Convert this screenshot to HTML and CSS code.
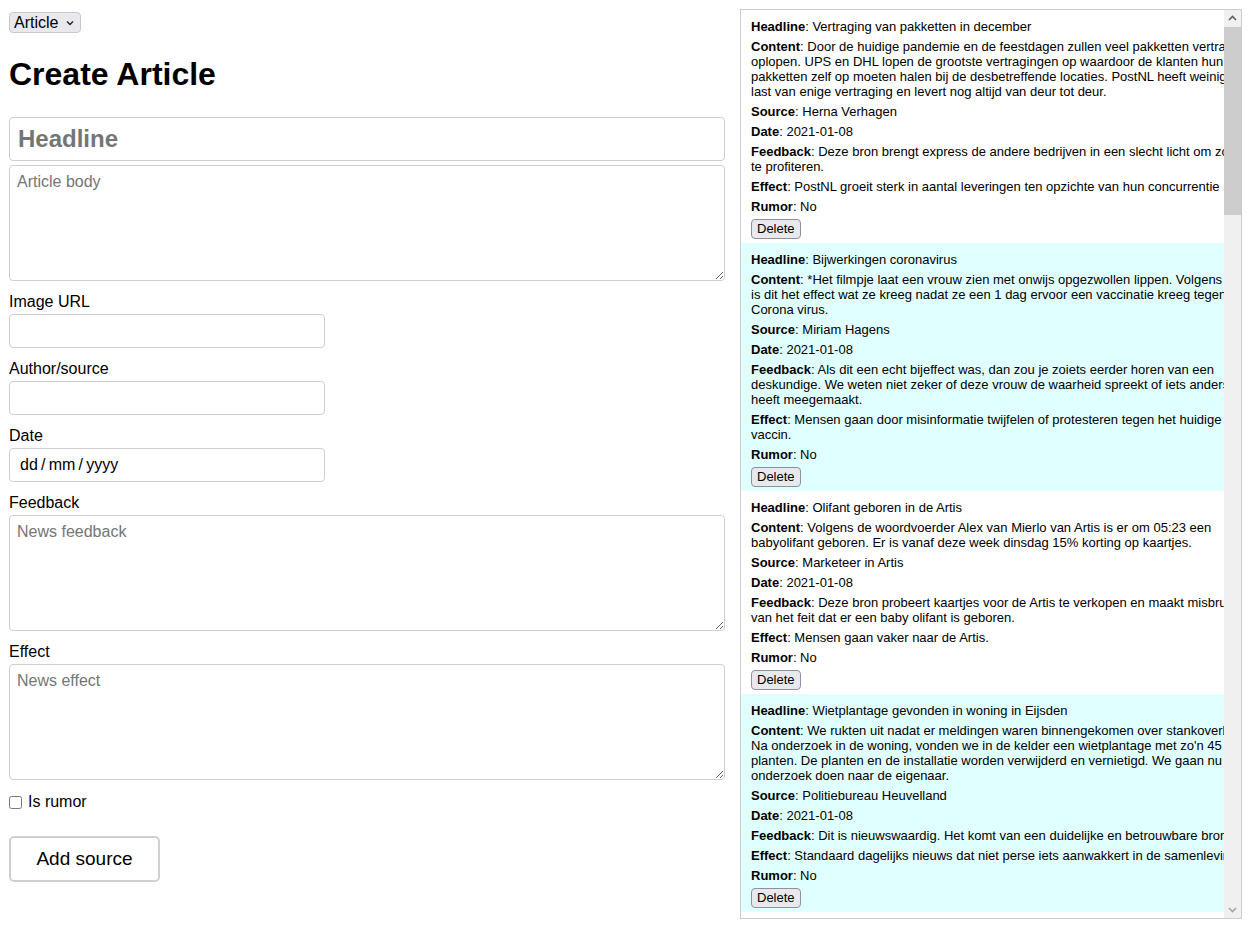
FILE: index.html
```html
<!DOCTYPE html>
<html lang="nl">
<head>
<meta charset="utf-8">
<title>Create Article</title>
<link rel="stylesheet" href="styles.css">
</head>
<body>
<div class="page">
  <main class="editor">
    <div class="select-wrap">
      <select class="type-select">
        <option>Article</option>
      </select>
      <svg class="select-chevron" width="8" height="6" viewBox="0 0 8 6" aria-hidden="true"><path d="M1 1.5 L4 4.5 L7 1.5" fill="none" stroke="#222" stroke-width="1.4"/></svg>
    </div>
    <h1 class="title">Create Article</h1>
    <form class="article-form">
      <input class="headline-input" type="text" placeholder="Headline">
      <textarea class="area body-area" placeholder="Article body"></textarea>
      <label class="field-label">Image URL</label>
      <input class="text-input" type="text">
      <label class="field-label">Author/source</label>
      <input class="text-input" type="text">
      <label class="field-label">Date</label>
      <input class="text-input date-input" type="text" placeholder="dd&#8201;/&#8201;mm&#8201;/&#8201;yyyy">
      <label class="field-label">Feedback</label>
      <textarea class="area" placeholder="News feedback"></textarea>
      <label class="field-label">Effect</label>
      <textarea class="area" placeholder="News effect"></textarea>
      <label class="check-row"><input class="check" type="checkbox"><span>Is rumor</span></label>
      <button class="submit-btn" type="button">Add source</button>
    </form>
  </main>

  <aside class="feed">
    <div class="feed-viewport">
    <div class="feed-list">
      <div class="item">
        <p><b>Headline</b>: Vertraging van pakketten in december</p>
        <p><b>Content</b>: Door de huidige pandemie en de feestdagen zullen veel pakketten vertraging oplopen. UPS en DHL lopen de grootste vertragingen op waardoor de klanten hun pakketten zelf op moeten halen bij de desbetreffende locaties. PostNL heeft weinig<br>last van enige vertraging en levert nog altijd van deur tot deur.</p>
        <p><b>Source</b>: Herna Verhagen</p>
        <p><b>Date</b>: 2021-01-08</p>
        <p><b>Feedback</b>: Deze bron brengt express de andere bedrijven in een slecht licht om zo zelf te profiteren.</p>
        <p><b>Effect</b>: PostNL groeit sterk in aantal leveringen ten opzichte van hun concurrentie</p>
        <p><b>Rumor</b>: No</p>
        <div class="item-actions"><button class="del-btn" type="button">Delete</button></div>
      </div>
      <div class="item">
        <p><b>Headline</b>: Bijwerkingen coronavirus</p>
        <p><b>Content</b>: *Het filmpje laat een vrouw zien met onwijs opgezwollen lippen. Volgens haar is dit het effect wat ze kreeg nadat ze een 1 dag ervoor een vaccinatie kreeg tegen Corona virus.</p>
        <p><b>Source</b>: Miriam Hagens</p>
        <p><b>Date</b>: 2021-01-08</p>
        <p><b>Feedback</b>: Als dit een echt bijeffect was, dan zou je zoiets eerder horen van een deskundige. We weten niet zeker of deze vrouw de waarheid spreekt of iets anders heeft meegemaakt.</p>
        <p><b>Effect</b>: Mensen gaan door misinformatie twijfelen of protesteren tegen het huidige vaccin.</p>
        <p><b>Rumor</b>: No</p>
        <div class="item-actions"><button class="del-btn" type="button">Delete</button></div>
      </div>
      <div class="item">
        <p><b>Headline</b>: Olifant geboren in de Artis</p>
        <p><b>Content</b>: Volgens de woordvoerder Alex van Mierlo van Artis is er om 05:23 een babyolifant geboren. Er is vanaf deze week dinsdag 15% korting op kaartjes.</p>
        <p><b>Source</b>: Marketeer in Artis</p>
        <p><b>Date</b>: 2021-01-08</p>
        <p><b>Feedback</b>: Deze bron probeert kaartjes voor de Artis te verkopen en maakt misbruik van het feit dat er een baby olifant is geboren.</p>
        <p><b>Effect</b>: Mensen gaan vaker naar de Artis.</p>
        <p><b>Rumor</b>: No</p>
        <div class="item-actions"><button class="del-btn" type="button">Delete</button></div>
      </div>
      <div class="item">
        <p><b>Headline</b>: Wietplantage gevonden in woning in Eijsden</p>
        <p><b>Content</b>: We rukten uit nadat er meldingen waren binnengekomen over stankoverlast. Na onderzoek in de woning, vonden we in de kelder een wietplantage met zo'n 45 planten. De planten en de installatie worden verwijderd en vernietigd. We gaan nu onderzoek doen naar de eigenaar.</p>
        <p><b>Source</b>: Politiebureau Heuvelland</p>
        <p><b>Date</b>: 2021-01-08</p>
        <p><b>Feedback</b>: Dit is nieuwswaardig. Het komt van een duidelijke en betrouwbare bron.</p>
        <p><b>Effect</b>: Standaard dagelijks nieuws dat niet perse iets aanwakkert in de samenleving.</p>
        <p><b>Rumor</b>: No</p>
        <div class="item-actions"><button class="del-btn" type="button">Delete</button></div>
      </div>
      <div class="item">
        <p><b>Headline</b>: Vertraging van pakketten in december</p>
        <p><b>Content</b>: Door de huidige pandemie en de feestdagen zullen veel pakketten vertraging oplopen. UPS en DHL lopen de grootste vertragingen op waardoor de klanten hun pakketten zelf op moeten halen bij de desbetreffende locaties. PostNL heeft weinig last van enige vertraging en levert nog altijd van deur tot deur.</p>
        <p><b>Source</b>: Herna Verhagen</p>
        <p><b>Date</b>: 2021-01-08</p>
        <p><b>Feedback</b>: Deze bron brengt express de andere bedrijven in een slecht licht om zo zelf te profiteren.</p>
        <p><b>Effect</b>: PostNL groeit sterk in aantal leveringen ten opzichte van hun concurrentie</p>
        <p><b>Rumor</b>: No</p>
        <div class="item-actions"><button class="del-btn" type="button">Delete</button></div>
      </div>
      <div class="item">
        <p><b>Headline</b>: Bijwerkingen coronavirus</p>
        <p><b>Content</b>: *Het filmpje laat een vrouw zien met onwijs opgezwollen lippen. Volgens haar is dit het effect wat ze kreeg nadat ze een 1 dag ervoor een vaccinatie kreeg tegen Corona virus.</p>
        <p><b>Source</b>: Miriam Hagens</p>
        <p><b>Date</b>: 2021-01-08</p>
        <p><b>Feedback</b>: Als dit een echt bijeffect was, dan zou je zoiets eerder horen van een deskundige. We weten niet zeker of deze vrouw de waarheid spreekt of iets anders heeft meegemaakt.</p>
        <p><b>Effect</b>: Mensen gaan door misinformatie twijfelen of protesteren tegen het huidige vaccin.</p>
        <p><b>Rumor</b>: No</p>
        <div class="item-actions"><button class="del-btn" type="button">Delete</button></div>
      </div>
      <div class="item">
        <p><b>Headline</b>: Olifant geboren in de Artis</p>
        <p><b>Content</b>: Volgens de woordvoerder Alex van Mierlo van Artis is er om 05:23 een babyolifant geboren. Er is vanaf deze week dinsdag 15% korting op kaartjes.</p>
        <p><b>Source</b>: Marketeer in Artis</p>
        <p><b>Date</b>: 2021-01-08</p>
        <p><b>Feedback</b>: Deze bron probeert kaartjes voor de Artis te verkopen en maakt misbruik van het feit dat er een baby olifant is geboren.</p>
        <p><b>Effect</b>: Mensen gaan vaker naar de Artis.</p>
        <p><b>Rumor</b>: No</p>
        <div class="item-actions"><button class="del-btn" type="button">Delete</button></div>
      </div>
      <div class="item">
        <p><b>Headline</b>: Wietplantage gevonden in woning in Eijsden</p>
        <p><b>Content</b>: We rukten uit nadat er meldingen waren binnengekomen over stankoverlast. Na onderzoek in de woning, vonden we in de kelder een wietplantage met zo'n 45 planten. De planten en de installatie worden verwijderd en vernietigd. We gaan nu onderzoek doen naar de eigenaar.</p>
        <p><b>Source</b>: Politiebureau Heuvelland</p>
        <p><b>Date</b>: 2021-01-08</p>
        <p><b>Feedback</b>: Dit is nieuwswaardig. Het komt van een duidelijke en betrouwbare bron.</p>
        <p><b>Effect</b>: Standaard dagelijks nieuws dat niet perse iets aanwakkert in de samenleving.</p>
        <p><b>Rumor</b>: No</p>
        <div class="item-actions"><button class="del-btn" type="button">Delete</button></div>
      </div>
      <div class="item">
        <p><b>Headline</b>: Vertraging van pakketten in december</p>
        <p><b>Content</b>: Door de huidige pandemie en de feestdagen zullen veel pakketten vertraging oplopen. UPS en DHL lopen de grootste vertragingen op waardoor de klanten hun pakketten zelf op moeten halen bij de desbetreffende locaties. PostNL heeft weinig last van enige vertraging en levert nog altijd van deur tot deur.</p>
        <p><b>Source</b>: Herna Verhagen</p>
        <p><b>Date</b>: 2021-01-08</p>
        <p><b>Feedback</b>: Deze bron brengt express de andere bedrijven in een slecht licht om zo zelf te profiteren.</p>
        <p><b>Effect</b>: PostNL groeit sterk in aantal leveringen ten opzichte van hun concurrentie</p>
        <p><b>Rumor</b>: No</p>
        <div class="item-actions"><button class="del-btn" type="button">Delete</button></div>
      </div>
      <div class="item">
        <p><b>Headline</b>: Bijwerkingen coronavirus</p>
        <p><b>Content</b>: *Het filmpje laat een vrouw zien met onwijs opgezwollen lippen. Volgens haar is dit het effect wat ze kreeg nadat ze een 1 dag ervoor een vaccinatie kreeg tegen Corona virus.</p>
        <p><b>Source</b>: Miriam Hagens</p>
        <p><b>Date</b>: 2021-01-08</p>
        <p><b>Feedback</b>: Als dit een echt bijeffect was, dan zou je zoiets eerder horen van een deskundige. We weten niet zeker of deze vrouw de waarheid spreekt of iets anders heeft meegemaakt.</p>
        <p><b>Effect</b>: Mensen gaan door misinformatie twijfelen of protesteren tegen het huidige vaccin.</p>
        <p><b>Rumor</b>: No</p>
        <div class="item-actions"><button class="del-btn" type="button">Delete</button></div>
      </div>
      <div class="item">
        <p><b>Headline</b>: Olifant geboren in de Artis</p>
        <p><b>Content</b>: Volgens de woordvoerder Alex van Mierlo van Artis is er om 05:23 een babyolifant geboren. Er is vanaf deze week dinsdag 15% korting op kaartjes.</p>
        <p><b>Source</b>: Marketeer in Artis</p>
        <p><b>Date</b>: 2021-01-08</p>
        <p><b>Feedback</b>: Deze bron probeert kaartjes voor de Artis te verkopen en maakt misbruik van het feit dat er een baby olifant is geboren.</p>
        <p><b>Effect</b>: Mensen gaan vaker naar de Artis.</p>
        <p><b>Rumor</b>: No</p>
        <div class="item-actions"><button class="del-btn" type="button">Delete</button></div>
      </div>
      <div class="item">
        <p><b>Headline</b>: Wietplantage gevonden in woning in Eijsden</p>
        <p><b>Content</b>: We rukten uit nadat er meldingen waren binnengekomen over stankoverlast. Na onderzoek in de woning, vonden we in de kelder een wietplantage met zo'n 45 planten. De planten en de installatie worden verwijderd en vernietigd. We gaan nu onderzoek doen naar de eigenaar.</p>
        <p><b>Source</b>: Politiebureau Heuvelland</p>
        <p><b>Date</b>: 2021-01-08</p>
        <p><b>Feedback</b>: Dit is nieuwswaardig. Het komt van een duidelijke en betrouwbare bron.</p>
        <p><b>Effect</b>: Standaard dagelijks nieuws dat niet perse iets aanwakkert in de samenleving.</p>
        <p><b>Rumor</b>: No</p>
        <div class="item-actions"><button class="del-btn" type="button">Delete</button></div>
      </div>
      <div class="item">
        <p><b>Headline</b>: Vertraging van pakketten in december</p>
        <p><b>Content</b>: Door de huidige pandemie en de feestdagen zullen veel pakketten vertraging oplopen. UPS en DHL lopen de grootste vertragingen op waardoor de klanten hun pakketten zelf op moeten halen bij de desbetreffende locaties. PostNL heeft weinig last van enige vertraging en levert nog altijd van deur tot deur.</p>
        <p><b>Source</b>: Herna Verhagen</p>
        <p><b>Date</b>: 2021-01-08</p>
        <p><b>Feedback</b>: Deze bron brengt express de andere bedrijven in een slecht licht om zo zelf te profiteren.</p>
        <p><b>Effect</b>: PostNL groeit sterk in aantal leveringen ten opzichte van hun concurrentie</p>
        <p><b>Rumor</b>: No</p>
        <div class="item-actions"><button class="del-btn" type="button">Delete</button></div>
      </div>
      <div class="item">
        <p><b>Headline</b>: Bijwerkingen coronavirus</p>
        <p><b>Content</b>: *Het filmpje laat een vrouw zien met onwijs opgezwollen lippen. Volgens haar is dit het effect wat ze kreeg nadat ze een 1 dag ervoor een vaccinatie kreeg tegen Corona virus.</p>
        <p><b>Source</b>: Miriam Hagens</p>
        <p><b>Date</b>: 2021-01-08</p>
        <p><b>Feedback</b>: Als dit een echt bijeffect was, dan zou je zoiets eerder horen van een deskundige. We weten niet zeker of deze vrouw de waarheid spreekt of iets anders heeft meegemaakt.</p>
        <p><b>Effect</b>: Mensen gaan door misinformatie twijfelen of protesteren tegen het huidige vaccin.</p>
        <p><b>Rumor</b>: No</p>
        <div class="item-actions"><button class="del-btn" type="button">Delete</button></div>
      </div>
      <div class="item">
        <p><b>Headline</b>: Olifant geboren in de Artis</p>
        <p><b>Content</b>: Volgens de woordvoerder Alex van Mierlo van Artis is er om 05:23 een babyolifant geboren. Er is vanaf deze week dinsdag 15% korting op kaartjes.</p>
        <p><b>Source</b>: Marketeer in Artis</p>
        <p><b>Date</b>: 2021-01-08</p>
        <p><b>Feedback</b>: Deze bron probeert kaartjes voor de Artis te verkopen en maakt misbruik van het feit dat er een baby olifant is geboren.</p>
        <p><b>Effect</b>: Mensen gaan vaker naar de Artis.</p>
        <p><b>Rumor</b>: No</p>
        <div class="item-actions"><button class="del-btn" type="button">Delete</button></div>
      </div>
      <div class="item">
        <p><b>Headline</b>: Wietplantage gevonden in woning in Eijsden</p>
        <p><b>Content</b>: We rukten uit nadat er meldingen waren binnengekomen over stankoverlast. Na onderzoek in de woning, vonden we in de kelder een wietplantage met zo'n 45 planten. De planten en de installatie worden verwijderd en vernietigd. We gaan nu onderzoek doen naar de eigenaar.</p>
        <p><b>Source</b>: Politiebureau Heuvelland</p>
        <p><b>Date</b>: 2021-01-08</p>
        <p><b>Feedback</b>: Dit is nieuwswaardig. Het komt van een duidelijke en betrouwbare bron.</p>
        <p><b>Effect</b>: Standaard dagelijks nieuws dat niet perse iets aanwakkert in de samenleving.</p>
        <p><b>Rumor</b>: No</p>
        <div class="item-actions"><button class="del-btn" type="button">Delete</button></div>
      </div>
      <div class="item">
        <p><b>Headline</b>: Vertraging van pakketten in december</p>
        <p><b>Content</b>: Door de huidige pandemie en de feestdagen zullen veel pakketten vertraging oplopen. UPS en DHL lopen de grootste vertragingen op waardoor de klanten hun pakketten zelf op moeten halen bij de desbetreffende locaties. PostNL heeft weinig last van enige vertraging en levert nog altijd van deur tot deur.</p>
        <p><b>Source</b>: Herna Verhagen</p>
        <p><b>Date</b>: 2021-01-08</p>
        <p><b>Feedback</b>: Deze bron brengt express de andere bedrijven in een slecht licht om zo zelf te profiteren.</p>
        <p><b>Effect</b>: PostNL groeit sterk in aantal leveringen ten opzichte van hun concurrentie</p>
        <p><b>Rumor</b>: No</p>
        <div class="item-actions"><button class="del-btn" type="button">Delete</button></div>
      </div>
      <div class="item">
        <p><b>Headline</b>: Bijwerkingen coronavirus</p>
        <p><b>Content</b>: *Het filmpje laat een vrouw zien met onwijs opgezwollen lippen. Volgens haar is dit het effect wat ze kreeg nadat ze een 1 dag ervoor een vaccinatie kreeg tegen Corona virus.</p>
        <p><b>Source</b>: Miriam Hagens</p>
        <p><b>Date</b>: 2021-01-08</p>
        <p><b>Feedback</b>: Als dit een echt bijeffect was, dan zou je zoiets eerder horen van een deskundige. We weten niet zeker of deze vrouw de waarheid spreekt of iets anders heeft meegemaakt.</p>
        <p><b>Effect</b>: Mensen gaan door misinformatie twijfelen of protesteren tegen het huidige vaccin.</p>
        <p><b>Rumor</b>: No</p>
        <div class="item-actions"><button class="del-btn" type="button">Delete</button></div>
      </div>
      <div class="item">
        <p><b>Headline</b>: Olifant geboren in de Artis</p>
        <p><b>Content</b>: Volgens de woordvoerder Alex van Mierlo van Artis is er om 05:23 een babyolifant geboren. Er is vanaf deze week dinsdag 15% korting op kaartjes.</p>
        <p><b>Source</b>: Marketeer in Artis</p>
        <p><b>Date</b>: 2021-01-08</p>
        <p><b>Feedback</b>: Deze bron probeert kaartjes voor de Artis te verkopen en maakt misbruik van het feit dat er een baby olifant is geboren.</p>
        <p><b>Effect</b>: Mensen gaan vaker naar de Artis.</p>
        <p><b>Rumor</b>: No</p>
        <div class="item-actions"><button class="del-btn" type="button">Delete</button></div>
      </div>
    </div>
    </div>
    <div class="scrollbar" aria-hidden="true">
      <div class="sb-btn">
        <svg width="17" height="17" viewBox="0 0 17 17"><path d="M5 10 L8.5 6.5 L12 10" fill="none" stroke="#606060" stroke-width="1.6"/></svg>
      </div>
      <div class="sb-track">
        <div class="sb-thumb" style="height: 188px"></div>
      </div>
      <div class="sb-btn">
        <svg width="17" height="17" viewBox="0 0 17 17"><path d="M5 7 L8.5 10.5 L12 7" fill="none" stroke="#a3a3a3" stroke-width="1.6"/></svg>
      </div>
    </div>
  </aside>
</div>
</body>
</html>
```

FILE: styles.css
```css
html, body {
  margin: 0;
  padding: 0;
  background: #ffffff;
}

body {
  font-family: "Liberation Sans", Arial, sans-serif;
  color: #000;
}

.page {
  display: flex;
  align-items: flex-start;
  gap: 15px;
  padding: 9px;
}

/* ---------- left editor ---------- */
.editor {
  width: 716px;
  flex: 0 0 716px;
}

.select-wrap {
  position: relative;
  display: inline-block;
  margin-top: 3px;
  vertical-align: top;
}

.type-select {
  -webkit-appearance: none;
  appearance: none;
  display: block;
  box-sizing: border-box;
  height: 21px;
  width: 72px;
  margin: 0;
  padding: 0 18px 0 4px;
  font-family: "Liberation Sans", Arial, sans-serif;
  font-size: 16px;
  line-height: 19px;
  color: #000;
  background: #e9e9ed;
  border: 1px solid #c8c8d0;
  border-radius: 4px;
}

.select-chevron {
  position: absolute;
  right: 7px;
  top: 8px;
  pointer-events: none;
}

.title {
  margin: 23px 0 24px;
  font-size: 32px;
  font-weight: bold;
  line-height: 37px;
}

.article-form {
  display: flex;
  flex-direction: column;
  align-items: flex-start;
}

.headline-input,
.text-input,
.area {
  box-sizing: border-box;
  margin: 0;
  font-family: "Liberation Sans", Arial, sans-serif;
  color: #000;
  background: #fff;
  border: 1px solid #cfcfcf;
  border-radius: 4px;
  outline: none;
}

.headline-input {
  width: 716px;
  height: 44px;
  padding: 0 8px;
  font-size: 24px;
  font-weight: bold;
}

.headline-input::placeholder {
  color: #757575;
  font-weight: bold;
}

.area {
  display: block;
  width: 716px;
  height: 116px;
  padding: 7px 7px;
  font-size: 16px;
  line-height: 18px;
  resize: vertical;
}

.body-area {
  margin-top: 4px;
}

.area::placeholder {
  color: #757575;
}

.field-label {
  display: block;
  margin: 12px 0 3px;
  font-size: 16px;
  line-height: 18px;
}

.text-input {
  width: 316px;
  height: 34px;
  padding: 0 8px;
  font-size: 16px;
}

.date-input {
  padding-left: 10px;
}

.date-input::placeholder {
  color: #000;
}

.check-row {
  display: flex;
  align-items: center;
  margin-top: 13px;
  font-size: 16px;
  line-height: 18px;
}

.check {
  width: 13px;
  height: 13px;
  margin: 0 6px 0 0;
}

.submit-btn {
  margin-top: 25px;
  box-sizing: border-box;
  width: 151px;
  height: 46px;
  padding: 0 25px;
  font-family: "Liberation Sans", Arial, sans-serif;
  font-size: 19px;
  color: #000;
  background: #fff;
  border: 2px solid #d0d0d0;
  border-radius: 5px;
}

/* ---------- right feed ---------- */
.feed {
  box-sizing: border-box;
  display: flex;
  width: 502px;
  flex: 0 0 502px;
  height: 910px;
  border: 1px solid #cccccc;
  font-size: 13px;
  line-height: 15px;
}

.feed-viewport {
  flex: 1 1 auto;
  min-width: 0;
  overflow-x: hidden;
  overflow-y: auto;
  scrollbar-width: none;
}

.feed-viewport::-webkit-scrollbar {
  display: none;
}

.feed-list {
  width: 523px;
}

.item {
  padding: 4px 10px;
}

.item:nth-child(even) {
  background: #e0ffff;
}

.item p {
  margin: 5px 0;
}

.item b {
  font-weight: bold;
}

.item-actions {
  margin-top: 5px;
  line-height: 0;
}

.del-btn {
  box-sizing: border-box;
  height: 20px;
  margin: 0;
  padding: 0 5px;
  font-family: "Liberation Sans", Arial, sans-serif;
  font-size: 13px;
  line-height: 16px;
  color: #000;
  background: #e9e9ed;
  border: 1px solid #8f8f9d;
  border-radius: 4px;
}

/* drawn scrollbar */
.scrollbar {
  flex: 0 0 17px;
  display: flex;
  flex-direction: column;
  background: #f0f0f0;
}

.sb-btn {
  flex: 0 0 17px;
  height: 17px;
}

.sb-btn svg {
  display: block;
}

.sb-track {
  flex: 1 1 auto;
  display: flex;
  flex-direction: column;
}

.sb-thumb {
  background: #cdcdcd;
}
```
